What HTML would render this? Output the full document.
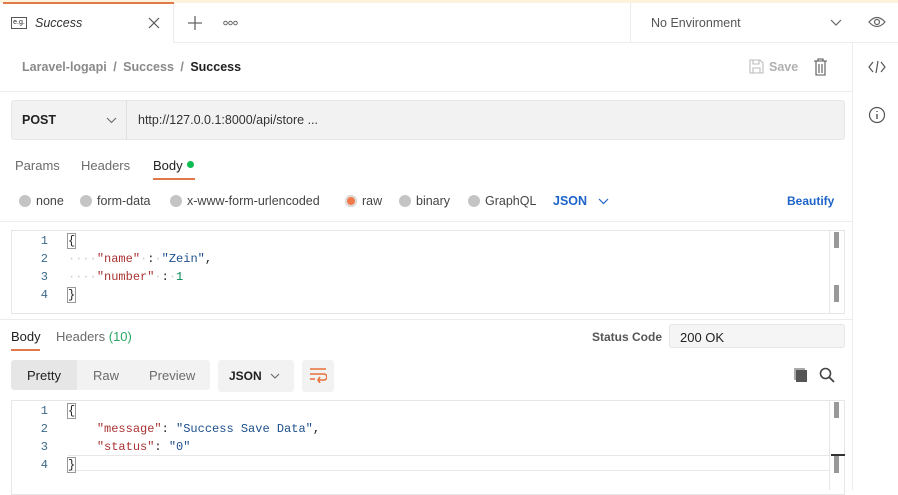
<!DOCTYPE html>
<html><head><style>
*{box-sizing:border-box;margin:0;padding:0}
body{width:898px;height:490px;overflow:hidden;background:#fff;font-family:"Liberation Sans",sans-serif;font-size:13px;color:#212121;position:relative}
.a{position:absolute}
.mono{font-family:"Liberation Mono",monospace;font-size:12px}
.g{color:#6b6b6b}
.rad{position:absolute;width:12px;height:12px;border-radius:50%;background:#c4c4c4}
.rl{position:absolute;top:194px;color:#444;font-size:12.5px}
</style></head><body>
<div class="a" style="left:0;top:0;width:898px;height:3px;background:#fdf3dc"></div>
<div class="a" style="left:0;top:3px;width:174px;height:40px;background:#fff;border-right:1px solid #ececec"></div>
<div class="a" style="left:3px;top:2px;width:171px;height:2px;background:#e0784a"></div>
<div class="a" style="left:174px;top:3px;width:724px;height:40px;border-bottom:1px solid #ececec"></div>
<div class="a" style="left:11px;top:17px;width:16px;height:12px;border:1px solid #555;font-size:7px;line-height:10px;text-align:center">e.g.</div>
<div class="a" style="left:35px;top:16px;font-style:italic;color:#333;font-size:12.5px">Success</div>
<svg class="a" style="left:148px;top:17px" width="12" height="12"><path d="M1 1l10 10M11 1L1 11" stroke="#555" stroke-width="1.2"/></svg>
<svg class="a" style="left:188px;top:16px" width="14" height="14"><path d="M7 0v14M0 7h14" stroke="#666" stroke-width="1.3"/></svg>
<svg class="a" style="left:223px;top:20px" width="15" height="6"><circle cx="2.5" cy="3" r="1.8" fill="none" stroke="#666"/><circle cx="7.5" cy="3" r="1.8" fill="none" stroke="#666"/><circle cx="12.5" cy="3" r="1.8" fill="none" stroke="#666"/></svg>
<div class="a" style="left:630px;top:3px;width:1px;height:40px;background:#ececec"></div>
<div class="a" style="left:651px;top:16px;color:#555;font-size:12.5px">No Environment</div>
<svg class="a" style="left:830px;top:19px" width="12" height="8"><path d="M1 1l5 5 5-5" fill="none" stroke="#666" stroke-width="1.2"/></svg>
<svg class="a" style="left:868px;top:15px" width="18" height="14"><path d="M1 7Q9-2 17 7Q9 16 1 7Z" fill="none" stroke="#666" stroke-width="1.2"/><circle cx="9" cy="7" r="2.5" fill="none" stroke="#666" stroke-width="1.2"/></svg>
<div class="a" style="left:852px;top:43px;width:1px;height:447px;background:#ececec"></div>
<svg class="a" style="left:868px;top:60px" width="18" height="14"><path d="M5 2L1 7l4 5M13 2l4 5-4 5M10 1L8 13" fill="none" stroke="#555" stroke-width="1.2"/></svg>
<svg class="a" style="left:868px;top:106px" width="18" height="18"><circle cx="9" cy="9" r="7.5" fill="none" stroke="#555" stroke-width="1.2"/><path d="M9 8v5M9 5v1" stroke="#555" stroke-width="1.4"/></svg>
<div class="a" style="left:22px;top:60px;color:#8a8a8a;font-weight:bold;font-size:12.5px;word-spacing:3px">Laravel-logapi / Success / <span style="color:#212121">Success</span></div>
<svg class="a" style="left:749px;top:59px" width="15" height="15"><path d="M1 1h10l3 3v10H1z M4 1v4h6V1 M4 14V9h7v5" fill="none" stroke="#bbb" stroke-width="1.1"/></svg>
<div class="a" style="left:769px;top:60px;color:#b0b0b0;font-weight:bold;font-size:12.5px">Save</div>
<svg class="a" style="left:813px;top:58px" width="15" height="18"><path d="M1 3h13M5 3V1h5v2M3 3v14h9V3M6 6v9M9 6v9" fill="none" stroke="#555" stroke-width="1.1"/></svg>
<div class="a" style="left:0;top:91px;width:852px;height:1px;background:#ececec"></div>
<div class="a" style="left:11px;top:100px;width:834px;height:40px;background:#f2f2f2;border:1px solid #e6e6e6;border-radius:3px"></div>
<div class="a" style="left:126px;top:100px;width:1px;height:40px;background:#e0e0e0"></div>
<div class="a" style="left:22px;top:113px;font-weight:bold;font-size:12.5px">POST</div>
<svg class="a" style="left:106px;top:117px" width="11" height="7"><path d="M1 1l4.5 4.5L10 1" fill="none" stroke="#666" stroke-width="1.1"/></svg>
<div class="a" style="left:138px;top:113px;color:#333;font-size:12.5px">http://127.0.0.1:8000/api/store ...</div>
<div class="a g" style="left:15px;top:158px">Params</div>
<div class="a g" style="left:81px;top:158px">Headers</div>
<div class="a" style="left:153px;top:158px">Body</div>
<div class="a" style="left:187px;top:161px;width:7px;height:7px;border-radius:50%;background:#0cbb52"></div>
<div class="a" style="left:153px;top:178px;width:42px;height:2px;background:#e0784a"></div>
<div class="rad" style="left:19px;top:195px"></div><div class="rl" style="left:36px">none</div>
<div class="rad" style="left:80px;top:195px"></div><div class="rl" style="left:97px">form-data</div>
<div class="rad" style="left:170px;top:195px"></div><div class="rl" style="left:187px">x-www-form-urlencoded</div>
<div class="rad" style="left:345px;top:195px;background:#f07a4a;box-shadow:0 0 0 2px #ddd inset"></div><div class="rl" style="left:362px">raw</div>
<div class="rad" style="left:399px;top:195px"></div><div class="rl" style="left:416px">binary</div>
<div class="rad" style="left:468px;top:195px"></div><div class="rl" style="left:485px">GraphQL</div>
<div class="a" style="left:553px;top:194px;color:#1d63c9;font-weight:bold;font-size:12.5px">JSON</div>
<svg class="a" style="left:598px;top:198px" width="11" height="7"><path d="M1 1l4.5 4.5L10 1" fill="none" stroke="#1d63c9" stroke-width="1.2"/></svg>
<div class="a" style="left:787px;top:194px;color:#1d63c9;font-weight:bold;font-size:12px">Beautify</div>
<div class="a" style="left:0;top:221px;width:852px;height:1px;background:#ececec"></div>
<div class="a" style="left:11px;top:230px;width:834px;height:84px;border:1px solid #e6e6e6"></div>
<div class="a" style="left:829px;top:231px;width:1px;height:82px;background:#e6e6e6"></div>
<div class="a" style="left:834px;top:232px;width:5px;height:16px;background:#999"></div>
<div class="a" style="left:834px;top:285px;width:5px;height:17px;background:#999"></div>
<div class="a mono" style="left:38px;top:232px;line-height:18px;color:#3a6a8a;text-align:right;width:10px">1<br>2<br>3<br>4</div>
<div class="a mono" style="left:68px;top:232px;line-height:18px;white-space:pre"><span style="outline:1px solid #999">{</span>
<span style="color:#ccc">····</span><span style="color:#a33">"name"</span><span style="color:#ccc">·</span>:<span style="color:#ccc">·</span><span style="color:#1d4f8c">"Zein"</span>,
<span style="color:#ccc">····</span><span style="color:#a33">"number"</span><span style="color:#ccc">·</span>:<span style="color:#ccc">·</span><span style="color:#098658">1</span>
<span style="outline:1px solid #999">}</span></div>
<div class="a" style="left:0;top:319px;width:852px;height:1px;background:#ececec"></div>
<div class="a" style="left:11px;top:329px">Body</div>
<div class="a g" style="left:56px;top:329px">Headers <span style="color:#2aa866">(10)</span></div>
<div class="a" style="left:11px;top:349px;width:29px;height:2px;background:#e0784a"></div>
<div class="a" style="left:592px;top:330px;color:#555;font-weight:bold;font-size:12px">Status Code</div>
<div class="a" style="left:669px;top:324px;width:176px;height:24px;background:#f5f5f5;border:1px solid #e6e6e6;border-radius:3px;padding:5px 10px">200 OK</div>
<div class="a" style="left:11px;top:360px;width:199px;height:30px;background:#f2f2f2;border-radius:3px"></div>
<div class="a" style="left:11px;top:360px;width:66px;height:30px;background:#e6e6e6;border-radius:3px 0 0 3px;padding:8px 16px">Pretty</div>
<div class="a g" style="left:93px;top:368px">Raw</div>
<div class="a g" style="left:149px;top:368px">Preview</div>
<div class="a" style="left:218px;top:360px;width:76px;height:32px;background:#f2f2f2;border-radius:3px;padding:9px 11px;font-weight:bold;font-size:12px">JSON</div>
<svg class="a" style="left:270px;top:373px" width="10" height="6"><path d="M1 1l4 4 4-4" fill="none" stroke="#666" stroke-width="1.1"/></svg>
<div class="a" style="left:302px;top:360px;width:32px;height:32px;background:#f2f2f2;border-radius:3px"></div>
<svg class="a" style="left:309px;top:367px" width="18" height="16"><path d="M1 2h16M1 7h14a3 3 0 010 6H9M11 10l-2 3 2 3M1 12h5" fill="none" stroke="#e8703a" stroke-width="1.6"/></svg>
<div class="a" style="left:796px;top:370px;width:11px;height:12px;background:#555;box-shadow:-2px -2px 0 0 #aaa"></div>
<svg class="a" style="left:819px;top:367px" width="16" height="16"><circle cx="6.5" cy="6.5" r="5" fill="none" stroke="#444" stroke-width="1.6"/><path d="M10 10l5 5" stroke="#444" stroke-width="1.8"/></svg>
<div class="a" style="left:11px;top:400px;width:834px;height:95px;border:1px solid #e6e6e6"></div>
<div class="a" style="left:68px;top:455px;width:761px;height:16px;border-top:1px solid #e8e8e8;border-bottom:1px solid #e8e8e8"></div>
<div class="a" style="left:829px;top:401px;width:1px;height:89px;background:#e6e6e6"></div>
<div class="a" style="left:834px;top:402px;width:5px;height:16px;background:#999"></div>
<div class="a" style="left:831px;top:454px;width:14px;height:2px;background:#333"></div>
<div class="a" style="left:834px;top:456px;width:5px;height:17px;background:#999"></div>
<div class="a mono" style="left:38px;top:402px;line-height:18px;color:#3a6a8a;text-align:right;width:10px">1<br>2<br>3<br>4</div>
<div class="a mono" style="left:68px;top:402px;line-height:18px;white-space:pre"><span style="outline:1px solid #999">{</span>
    <span style="color:#a33">"message"</span>: <span style="color:#1d4f8c">"Success Save Data"</span>,
    <span style="color:#a33">"status"</span>: <span style="color:#1d4f8c">"0"</span>
<span style="outline:1px solid #999">}</span></div>
</body></html>
